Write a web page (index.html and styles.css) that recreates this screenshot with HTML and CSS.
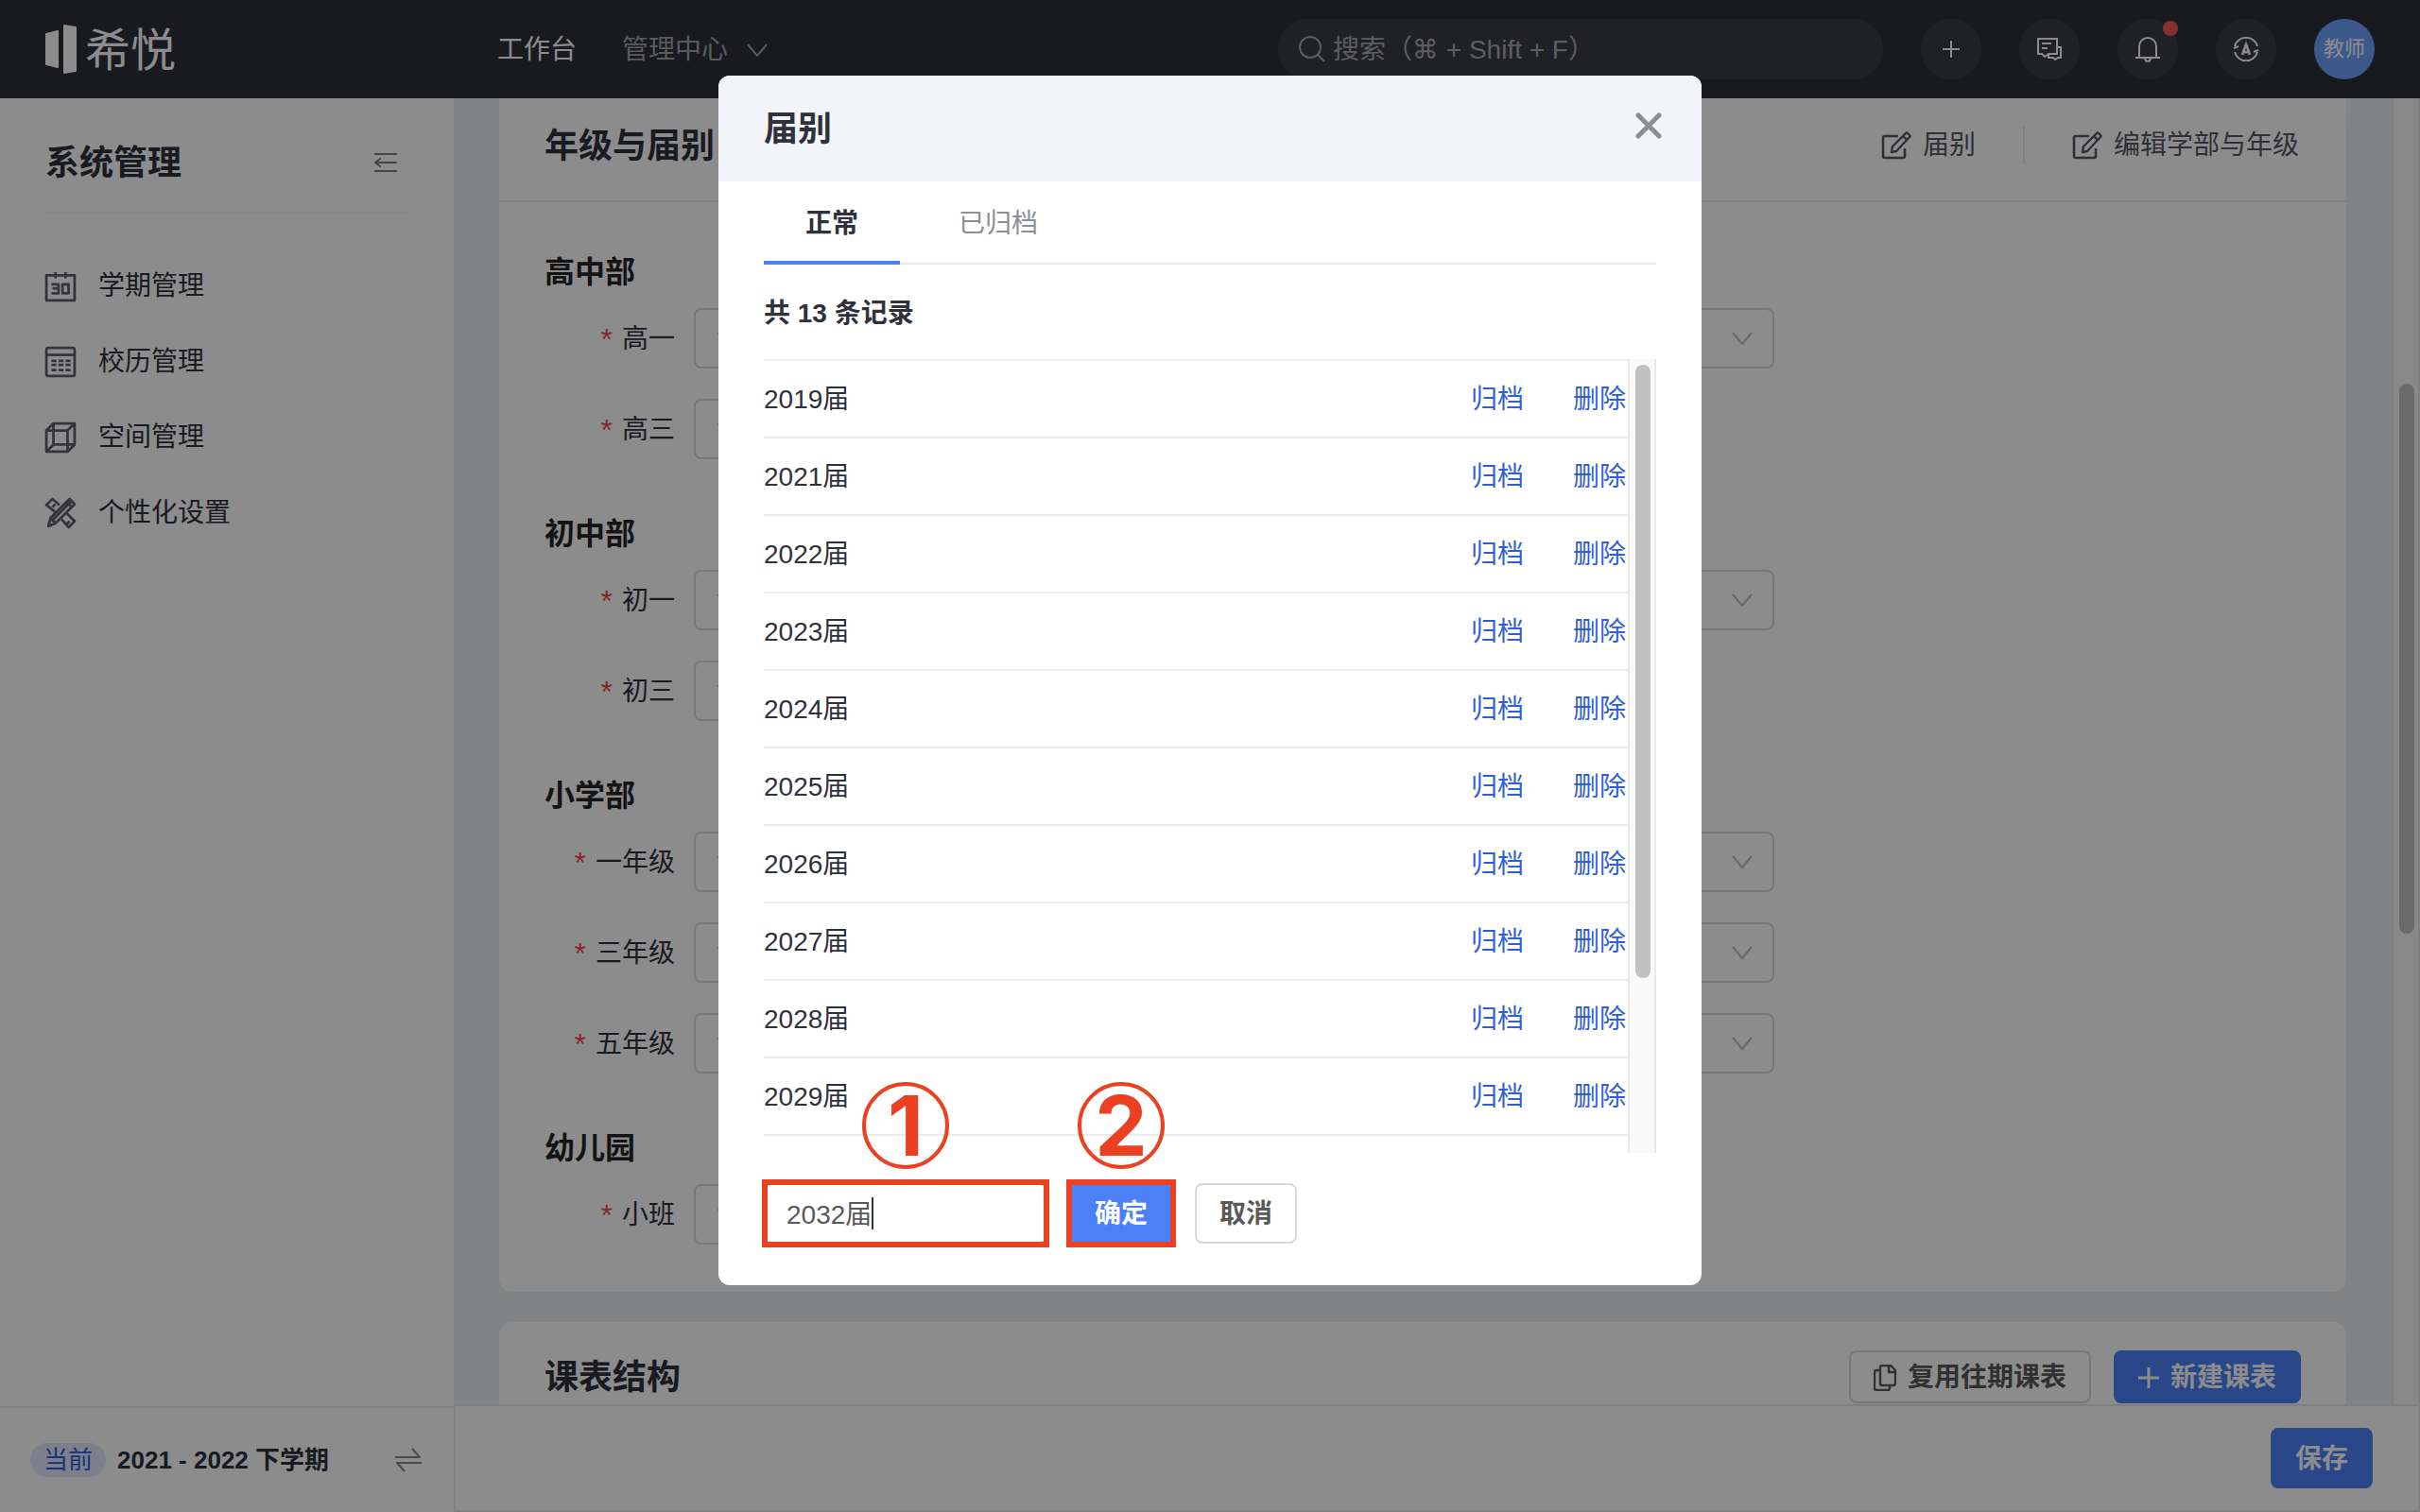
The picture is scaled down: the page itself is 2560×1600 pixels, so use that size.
FILE: index.html
```html
<!DOCTYPE html>
<html lang="zh-CN">
<head>
    <meta charset="UTF-8">
    <meta name="viewport" content="width=device-width, initial-scale=1.0">
    <title>系统管理 - 希悦</title>
    <link rel="stylesheet" href="styles.css">
</head>
<body>
    <!-- Shared icons -->
    <svg class="sprite" aria-hidden="true">
        <symbol id="i-down" viewBox="0 0 22 14"><path d="M1 1l10 12L21 1" fill="none" stroke="currentColor" stroke-width="2"/></symbol>
        <symbol id="i-edit" viewBox="0 0 32 32">
            <path d="M18 6H4a2 2 0 0 0-2 2v19a2 2 0 0 0 2 2h19a2 2 0 0 0 2-2v-8" fill="none" stroke="currentColor" stroke-width="2.6"/>
            <path d="M11 23l1-6L26 3q1-1 2 0l2 2q1 1 0 2L16 22zM23 6l4 4" fill="none" stroke="currentColor" stroke-width="2.4" stroke-linejoin="round"/>
        </symbol>
    </svg>

    <div class="app">
        <header class="topbar">
            <a class="logo" href="#">
                <svg width="34" height="52" viewBox="0 0 34 52" fill="currentColor"><path d="M0 10q0-1 1-1l12-3q1 0 1 1v38q0 1-1 1L1 43q-1 0-1-1zM19 1q0-1 1-1l12 2q1 0 1 1v46q0 1-1 1l-12 2q-1 0-1-1z"/></svg>
                <span>希悦</span>
            </a>
            <nav class="nav">
                <a class="current" href="#">工作台</a>
                <a href="#">管理中心<svg width="22" height="14"><use href="#i-down"/></svg></a>
            </nav>
            <div class="tools">
                <label class="search">
                    <svg width="28" height="28" viewBox="0 0 28 28" fill="none" stroke="currentColor" stroke-width="2"><circle cx="12" cy="12" r="11"/><path d="M20 20l7 7"/></svg>
                    <input type="text" placeholder="搜索（⌘ + Shift + F）" aria-label="搜索">
                </label>
                <button class="round" aria-label="新建">
                    <svg width="20" height="20" viewBox="0 0 20 20" stroke="currentColor" stroke-width="2"><path d="M10 1v18M1 10h18"/></svg>
                </button>
                <button class="round" aria-label="消息">
                    <svg width="28" height="26" viewBox="0 0 28 26" fill="none" stroke="currentColor" stroke-width="2"><path d="M2 2h20v16h-9l-4 3-3-3H2zM6 7h10M6 12h6"/><path d="M22 11h4v11h-3l-3 2-2-2h-5v-4"/></svg>
                </button>
                <button class="round" aria-label="通知">
                    <svg width="28" height="28" viewBox="0 0 28 28" fill="none" stroke="currentColor" stroke-width="2"><path d="M5 23V11a9 9 0 0 1 18 0v12M1 23h26M11 23q0 4 3 4t3-4"/></svg>
                    <span class="dot"></span>
                </button>
                <button class="round" aria-label="切换语言">
                    <svg width="28" height="28" viewBox="0 0 28 28" fill="none" stroke="currentColor" stroke-width="2"><path d="M2 11a12.4 12.4 0 0 1 24 0M26 17a12.4 12.4 0 0 1-24 0M1 13l5-2M27 15l-5 2"/><path d="M10 20l4-11 4 11M11 17h6" stroke-width="2.6"/></svg>
                </button>
                <button class="round avatar">教师</button>
            </div>
        </header>

        <div class="body">
            <aside class="sidebar">
                <div class="side-head">
                    <h2>系统管理</h2>
                    <svg width="24" height="20" viewBox="0 0 24 20" fill="none" stroke="currentColor" stroke-width="2" stroke-linecap="round"><path d="M1 1h22M2 10h21M1 19h22M6 6l-5 4 5 4"/></svg>
                </div>
                <nav class="menu">
                    <a href="#">
                        <svg viewBox="0 0 30 30"><path d="M1 4h28v25H1zM10 1v6M20 1v6"/><path d="M6 13h7v9H6M7 17h6M17 13h6v9h-6z"/></svg>
                        学期管理
                    </a>
                    <a href="#">
                        <svg viewBox="0 0 30 30"><rect x="1" y="1" width="28" height="28" rx="2"/><path d="M1 8h28"/><path d="M6 14h19M6 18h19M6 23h19" stroke-dasharray="5 2"/></svg>
                        校历管理
                    </a>
                    <a href="#">
                        <svg viewBox="0 0 30 30"><path d="M1 8l7-7h21v21l-7 7H1zM1 8h21v21M22 8l7-7M8 1v21h21M1 29l7-7"/></svg>
                        空间管理
                    </a>
                    <a href="#">
                        <svg viewBox="0 0 30 30"><path d="M3 28l2-8L24 1l5 5L10 25zM7 22L25 4M5 20l5 5M21 4l5 5"/><path d="M10 14L1 7l6-6 7 6M7 9l3-3M21 15l8 8-6 6-7-8M21 26l3-3"/></svg>
                        个性化设置
                    </a>
                </nav>
                <div class="side-foot">
                    <span class="badge">当前</span>
                    <span class="term">2021 - 2022 下学期</span>
                    <svg width="28" height="26" viewBox="0 0 28 26" fill="none" stroke="currentColor" stroke-width="2" stroke-linejoin="round"><path d="M0 10h26L18 1M28 16H2l8 9"/></svg>
                </div>
            </aside>

            <main class="main">
                <div class="scroll">
                    <div class="cards">
                        <section class="card card-top">
                            <div class="card-head">
                                <h2>年级与届别</h2>
                                <div class="actions">
                                    <a href="#"><svg width="32" height="32"><use href="#i-edit"/></svg>届别</a>
                                    <span class="split"></span>
                                    <a href="#"><svg width="32" height="32"><use href="#i-edit"/></svg>编辑学部与年级</a>
                                </div>
                            </div>
                            <form class="grades">
                                <fieldset>
                                    <legend>高中部</legend>
                                    <div class="row">
                                        <label for="g10">高一</label>
                                        <div class="select"><select id="g10"><option>请选择</option></select><svg><use href="#i-down"/></svg></div>
                                        <div class="select"><select aria-label="高二"><option></option></select><svg><use href="#i-down"/></svg></div>
                                    </div>
                                    <div class="row">
                                        <label for="g12">高三</label>
                                        <div class="select"><select id="g12"><option>请选择</option></select><svg><use href="#i-down"/></svg></div>
                                    </div>
                                </fieldset>
                                <fieldset>
                                    <legend>初中部</legend>
                                    <div class="row">
                                        <label for="g7">初一</label>
                                        <div class="select"><select id="g7"><option>请选择</option></select><svg><use href="#i-down"/></svg></div>
                                        <div class="select"><select aria-label="初二"><option></option></select><svg><use href="#i-down"/></svg></div>
                                    </div>
                                    <div class="row">
                                        <label for="g9">初三</label>
                                        <div class="select"><select id="g9"><option>请选择</option></select><svg><use href="#i-down"/></svg></div>
                                    </div>
                                </fieldset>
                                <fieldset>
                                    <legend>小学部</legend>
                                    <div class="row">
                                        <label for="g1">一年级</label>
                                        <div class="select"><select id="g1"><option>请选择</option></select><svg><use href="#i-down"/></svg></div>
                                        <div class="select"><select aria-label="二年级"><option></option></select><svg><use href="#i-down"/></svg></div>
                                    </div>
                                    <div class="row">
                                        <label for="g3">三年级</label>
                                        <div class="select"><select id="g3"><option>请选择</option></select><svg><use href="#i-down"/></svg></div>
                                        <div class="select"><select aria-label="四年级"><option></option></select><svg><use href="#i-down"/></svg></div>
                                    </div>
                                    <div class="row">
                                        <label for="g5">五年级</label>
                                        <div class="select"><select id="g5"><option>请选择</option></select><svg><use href="#i-down"/></svg></div>
                                        <div class="select"><select aria-label="六年级"><option></option></select><svg><use href="#i-down"/></svg></div>
                                    </div>
                                </fieldset>
                                <fieldset>
                                    <legend>幼儿园</legend>
                                    <div class="row">
                                        <label for="k1">小班</label>
                                        <div class="select"><select id="k1"><option>请选择</option></select><svg><use href="#i-down"/></svg></div>
                                    </div>
                                </fieldset>
                            </form>
                        </section>

                        <section class="card">
                            <div class="table-head">
                                <h2>课表结构</h2>
                                <button class="btn small">
                                    <svg width="24" height="28" viewBox="0 0 24 28" fill="none" stroke="currentColor" stroke-width="2.4" stroke-linejoin="round"><path d="M9 1h9l5 5v14a2 2 0 0 1-2 2H9a2 2 0 0 1-2-2V3a2 2 0 0 1 2-2zM16 1v7h7M7 6H3a2 2 0 0 0-2 2v17a2 2 0 0 0 2 2h12a2 2 0 0 0 2-2v-3"/></svg>
                                    复用往期课表
                                </button>
                                <button class="btn small primary">
                                    <svg width="22" height="22" viewBox="0 0 22 22" stroke="currentColor" stroke-width="3"><path d="M11 0v22M0 11h22"/></svg>
                                    新建课表
                                </button>
                            </div>
                        </section>
                    </div>
                    <div class="track page-track"><div class="thumb"></div></div>
                </div>
                <footer class="savebar">
                    <button class="btn primary">保存</button>
                </footer>
            </main>
        </div>
    </div>

    <div class="mask">
        <div class="modal" role="dialog" aria-labelledby="modal-title">
            <div class="modal-head">
                <h2 id="modal-title">届别</h2>
                <button class="close" aria-label="关闭">
                    <svg width="28" height="28" viewBox="0 0 28 28" stroke="currentColor" stroke-width="5" stroke-linecap="round"><path d="M3 3l22 22M25 3L3 25"/></svg>
                </button>
            </div>
            <div class="modal-body">
                <div class="tabs" role="tablist">
                    <button class="tab active" role="tab">正常</button>
                    <button class="tab" role="tab">已归档</button>
                </div>
                <p class="count">共 13 条记录</p>
                <div class="list-wrap">
                    <ul class="list">
                        <li>2019届<span><a href="#">归档</a><a href="#">删除</a></span></li>
                        <li>2021届<span><a href="#">归档</a><a href="#">删除</a></span></li>
                        <li>2022届<span><a href="#">归档</a><a href="#">删除</a></span></li>
                        <li>2023届<span><a href="#">归档</a><a href="#">删除</a></span></li>
                        <li>2024届<span><a href="#">归档</a><a href="#">删除</a></span></li>
                        <li>2025届<span><a href="#">归档</a><a href="#">删除</a></span></li>
                        <li>2026届<span><a href="#">归档</a><a href="#">删除</a></span></li>
                        <li>2027届<span><a href="#">归档</a><a href="#">删除</a></span></li>
                        <li>2028届<span><a href="#">归档</a><a href="#">删除</a></span></li>
                        <li>2029届<span><a href="#">归档</a><a href="#">删除</a></span></li>
                    </ul>
                    <div class="track"><div class="thumb"></div></div>
                </div>
                <div class="add">
                    <div class="step step-input">
                        <input type="text" value="2032届" aria-label="届别名称">
                        <span class="caret"></span>
                        <span class="frame"></span>
                        <span class="num">1</span>
                    </div>
                    <div class="step">
                        <button class="btn primary">确定</button>
                        <span class="frame"></span>
                        <span class="num">2</span>
                    </div>
                    <button class="btn">取消</button>
                </div>
            </div>
        </div>
    </div>
</body>
</html>
```
FILE: styles.css
```css
* {
    box-sizing: border-box;
}
body {
    margin: 0;
    font-family: "Liberation Sans", "Noto Sans CJK SC", sans-serif;
    font-size: 28px;
    line-height: 40px;
    color: #2f323c;
}
h2 {
    margin: 0;
    padding-top: 2px;
    font-size: 36px;
    line-height: 46px;
}
a {
    color: inherit;
    text-decoration: none;
}
button, input, select {
    font: inherit;
    color: inherit;
}
button {
    padding: 0;
    border: none;
    background: none;
    cursor: pointer;
}
svg {
    flex: none;
}
.sprite {
    position: absolute;
    width: 0;
    height: 0;
}
.app {
    display: flex;
    flex-direction: column;
    height: 100vh;
    overflow: hidden;
}

/* top bar */
.topbar {
    display: flex;
    align-items: center;
    flex: none;
    height: 104px;
    padding: 0 48px;
    background: #2f313a;
    color: #fff;
}
.logo {
    display: flex;
    align-items: center;
    gap: 8px;
    width: 478px;
    font-size: 48px;
}
.logo span {
    padding-top: 4px;
}
.nav {
    display: flex;
    gap: 48px;
    padding-top: 2px;
    color: #a3a4a8;
}
.nav a {
    display: flex;
    align-items: center;
    gap: 20px;
}
.nav .current {
    color: #fff;
}
.tools {
    display: flex;
    gap: 40px;
    margin-left: auto;
}
.search {
    display: flex;
    align-items: center;
    gap: 8px;
    width: 640px;
    height: 64px;
    padding: 0 22px;
    border-radius: 32px;
    background: #3b3d44;
    color: #a8a9ad;
}
.search input {
    flex: 1;
    min-width: 0;
    padding: 2px 0 0;
    border: none;
    outline: none;
    background: none;
    font-family: "Liberation Sans", "DejaVu Sans", "Noto Sans CJK SC", sans-serif;
}
.search input::placeholder {
    color: #a8a9ad;
}
.round {
    position: relative;
    display: flex;
    align-items: center;
    justify-content: center;
    width: 64px;
    height: 64px;
    border-radius: 50%;
    background: #3b3d44;
}
.dot {
    position: absolute;
    top: 2px;
    right: 0;
    width: 16px;
    height: 16px;
    border-radius: 50%;
    background: #f45956;
}
.avatar {
    background: #6fa3ff;
    font-size: 22px;
}

/* sidebar */
.body {
    display: flex;
    flex: 1;
    min-height: 0;
}
.sidebar {
    display: flex;
    flex-direction: column;
    flex: none;
    width: 480px;
    background: #fff;
}
.side-head {
    display: flex;
    align-items: center;
    justify-content: space-between;
    height: 122px;
    margin: 0 48px;
    padding: 16px 12px 0 0;
    border-bottom: 2px solid #f3f4f6;
    color: #7c7e86;
}
.side-head h2 {
    color: #2f323c;
}
.menu {
    flex: 1;
    padding: 36px 48px;
}
.menu a {
    display: flex;
    align-items: center;
    gap: 24px;
    height: 80px;
    padding-top: 2px;
}
.menu svg {
    width: 32px;
    height: 32px;
    fill: none;
    stroke: #5f6169;
    stroke-width: 2.6;
    stroke-linejoin: round;
    overflow: visible;
}
.side-foot {
    display: flex;
    align-items: center;
    height: 112px;
    padding: 0 34px 0 32px;
    border-top: 2px solid #e8e8ea;
    font-size: 26px;
    color: #85878f;
}
.badge {
    padding: 0 14px;
    border-radius: 18px;
    background: #e0e9fc;
    color: #2f5fd8;
    line-height: 36px;
}
.term {
    flex: 1;
    margin-left: 12px;
    font-weight: 600;
    color: #2f323c;
}

/* content */
.main {
    display: flex;
    flex-direction: column;
    flex: 1;
    min-width: 0;
    background: #ecf0f4;
}
.scroll {
    display: flex;
    flex: 1;
    min-height: 0;
    overflow: hidden;
}
.cards {
    flex: 1;
    min-width: 0;
    padding: 0 48px;
}
.card {
    padding: 0 48px;
    border-radius: 14px;
    background: #fff;
    box-shadow: 0 4px 32px rgba(0, 0, 0, .02);
}
.card-top {
    margin-bottom: 32px;
    border-radius: 0 0 14px 14px;
}
.card-head {
    display: flex;
    align-items: center;
    justify-content: space-between;
    height: 110px;
    margin: 0 -48px;
    padding: 0 50px 8px 48px;
    border-bottom: 2px solid #e8e8ea;
}
.actions {
    display: flex;
    align-items: center;
    gap: 50px;
    color: #565861;
}
.actions a {
    display: flex;
    align-items: center;
    gap: 12px;
}
.split {
    width: 2px;
    height: 40px;
    background: #e8e8ea;
}
.grades {
    width: 70%;
    padding: 50px 0;
}
fieldset {
    margin: 0 0 55px;
    padding: 0;
    border: none;
}
fieldset:last-child {
    margin-bottom: 0;
}
legend {
    padding: 2px 0 16px;
    font-size: 32px;
    line-height: 44px;
    font-weight: 600;
    color: #262626;
}
.row {
    display: grid;
    grid-template-columns: 138px 1fr 1fr;
    align-items: center;
    gap: 20px;
    margin-bottom: 32px;
}
.row:last-child {
    margin-bottom: 0;
}
.row label {
    display: flex;
    align-items: center;
    justify-content: flex-end;
    gap: 10px;
    padding-top: 2px;
}
.row label::before {
    content: "*";
    font-size: 32px;
    color: #f5484a;
}
.select {
    position: relative;
}
.select select {
    display: block;
    width: 100%;
    height: 64px;
    padding: 0 22px;
    border: 2px solid #d9d9d9;
    border-radius: 8px;
    background: #fff;
    color: #bfbfbf;
    appearance: none;
}
.select svg {
    position: absolute;
    top: 25px;
    right: 23px;
    width: 22px;
    height: 14px;
    color: #bfbfbf;
    pointer-events: none;
}
.table-head {
    display: flex;
    align-items: center;
    gap: 24px;
    padding: 30px 0;
}
.table-head h2 {
    margin-right: auto;
}
.btn {
    display: flex;
    align-items: center;
    justify-content: center;
    gap: 12px;
    height: 64px;
    padding: 2px 24px 0;
    border: 2px solid #d9d9d9;
    border-radius: 8px;
    background: #fff;
    color: #595959;
    font-weight: 600;
}
.btn.small {
    height: 56px;
}
.btn.primary {
    border-color: #4c80f8;
    background: #4c80f8;
    color: #fff;
}
.savebar {
    display: flex;
    align-items: center;
    justify-content: flex-end;
    height: 114px;
    padding: 0 48px;
    border: 2px solid #e8e8ea;
    background: #fff;
}

/* scrollbars */
.track {
    flex: none;
    width: 30px;
    padding: 6px 6px 185px;
    border: 2px solid #e8e8e8;
    border-width: 0 2px;
    background: #fafafa;
}
.thumb {
    width: 16px;
    height: 100%;
    border-radius: 8px;
    background: #c1c1c1;
}
.page-track {
    padding: 302px 6px 498px;
}

/* modal */
.mask {
    position: fixed;
    inset: 0;
    display: flex;
    align-items: flex-start;
    justify-content: center;
    padding-top: 80px;
    background: rgba(0, 0, 0, .45);
}
.modal {
    width: 1040px;
    border-radius: 12px;
    overflow: hidden;
    background: #fff;
}
.modal-head {
    display: flex;
    align-items: center;
    justify-content: space-between;
    height: 112px;
    padding: 0 42px 0 48px;
    background: #f2f4f8;
}
.close {
    display: flex;
    padding: 0 0 6px;
    color: #8b8e95;
}
.modal-body {
    padding: 0 48px 44px;
}
.tabs {
    display: flex;
    gap: 18px;
    border-bottom: 2px solid #ebebeb;
}
.tab {
    height: 88px;
    margin-bottom: -2px;
    padding: 6px 44px 0;
    border-bottom: 4px solid transparent;
    color: #8b8e95;
}
.tab.active {
    border-color: #4c80f8;
    font-weight: 600;
    color: #2f323c;
}
.count {
    margin: 0;
    padding: 32px 0 28px;
    font-weight: 600;
}
.list-wrap {
    display: flex;
    height: 840px;
    margin-bottom: 32px;
    overflow: hidden;
}
.list {
    flex: 1;
    margin: 0;
    padding: 0;
    list-style: none;
    border-top: 2px solid #f2f2f2;
}
.list li {
    display: flex;
    align-items: center;
    justify-content: space-between;
    height: 82px;
    padding: 2px 2px 0 0;
    border-bottom: 2px solid #ebebeb;
}
.list span {
    display: flex;
    gap: 52px;
    color: #2f5fd8;
}
.add {
    display: flex;
    gap: 24px;
}

/* numbered steps */
.step {
    position: relative;
}
.step input {
    display: block;
    width: 300px;
    height: 64px;
    padding: 0 22px 2px;
    border: 2px solid #d9d9d9;
    border-radius: 8px;
    outline: none;
    color: #595959;
}
.caret {
    position: absolute;
    top: 15px;
    left: 114px;
    width: 2px;
    height: 34px;
    background: #333;
}
.frame {
    position: absolute;
    inset: -4px;
    border: 6px solid #ec4023;
    pointer-events: none;
}
.step-input .frame {
    inset: -4px -2px;
}
.num {
    position: absolute;
    bottom: calc(100% + 15px);
    left: calc(50% - 46px);
    width: 92px;
    height: 92px;
    border: 4px solid #ec4023;
    border-radius: 50%;
    color: #ec4023;
    font-family: Inter, "Liberation Sans", sans-serif;
    font-size: 88px;
    line-height: 84px;
    font-weight: 700;
    text-align: center;
}
```
